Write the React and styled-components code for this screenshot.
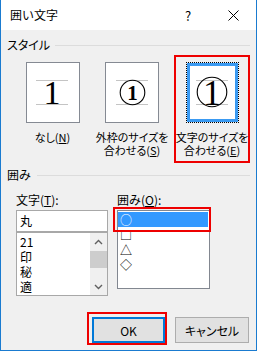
import React from "react";
import styled, { createGlobalStyle } from "styled-components";

const GlobalStyle = createGlobalStyle`
	html, body {
		margin: 0;
		padding: 0;
		background: #ffffff;
	}
	body {
		font-family: "Noto Sans CJK JP", "Noto Sans", sans-serif;
		font-size: 12px;
		color: #000000;
	}
`;

const styleOptions = [
	{ key: "none", lines: [["なし(", "N", ")"]], kind: "plain" },
	{ key: "frame", lines: [["外枠のサイズを"], ["合わせる(", "S", ")"]], kind: "small" },
	{ key: "text", lines: [["文字のサイズを"], ["合わせる(", "E", ")"]], kind: "large", selected: true },
];

const characters = ["21", "印", "秘", "適"];
const enclosures = ["○", "□", "△", "◇"];

const App = () => {
	const renderLabel = (parts, i) => (
		<Line key={i}>
			{parts[0]}
			{parts[1] && <u>{parts[1]}</u>}
			{parts[2]}
		</Line>
	);

	return (
		<>
			<GlobalStyle />
			<Window>
				<TitleBar>
					<Title>囲い文字</Title>
					<HelpButton>?</HelpButton>
					<CloseButton>
						<svg width='11' height='11' viewBox='0 0 11 11'>
							<path d='M0.5 0.5 L10.5 10.5 M10.5 0.5 L0.5 10.5' stroke='#000' strokeWidth='1' />
						</svg>
					</CloseButton>
				</TitleBar>

				<Body>
					<GroupHeader>
						<span>スタイル</span>
						<Rule />
					</GroupHeader>

					<StyleRow>
						{styleOptions.map((o) => (
							<StyleOption key={o.key} $selected={o.selected}>
								{o.kind === "plain" && (
									<Preview>
										<svg width='52' height='59'>
											<line x1='9' y1='17.5' x2='41' y2='17.5' stroke='#c4c4c4' />
											<line x1='9' y1='41.5' x2='41' y2='41.5' stroke='#c4c4c4' />
											<text x='25' y='41' textAnchor='middle' fontFamily='Liberation Serif' fontSize='34'>
												1
											</text>
										</svg>
									</Preview>
								)}
								{o.kind === "small" && (
									<Preview>
										<svg width='52' height='59'>
											<line x1='10' y1='17.5' x2='42' y2='17.5' stroke='#c4c4c4' />
											<line x1='10' y1='41.5' x2='42' y2='41.5' stroke='#c4c4c4' />
											<circle cx='26.5' cy='29.5' r='12.3' fill='none' stroke='#000' strokeWidth='1.1' />
											<text
												x='26.5'
												y='37'
												textAnchor='middle'
												fontFamily='Liberation Serif'
												fontWeight='bold'
												fontSize='21'>
												1
											</text>
										</svg>
									</Preview>
								)}
								{o.kind === "large" && (
									<FocusFrame>
										<SelectedPreview>
											<svg width='45' height='53'>
												<line x1='6' y1='14.5' x2='38' y2='14.5' stroke='#c4c4c4' />
												<line x1='6' y1='38.5' x2='38' y2='38.5' stroke='#c4c4c4' />
												<circle cx='22' cy='26' r='14.8' fill='none' stroke='#000' strokeWidth='1.1' />
												<text x='22' y='38.5' textAnchor='middle' fontFamily='Liberation Serif' fontSize='36'>
													1
												</text>
											</svg>
										</SelectedPreview>
									</FocusFrame>
								)}
								<OptionLabel>{o.lines.map(renderLabel)}</OptionLabel>
							</StyleOption>
						))}
					</StyleRow>

					<GroupHeader $gap='6px' $top='5px'>
						<span>囲み</span>
						<Rule />
					</GroupHeader>

					<FieldRow>
						<Field $width='92px'>
							<FieldLabel>
								文字(<u>T</u>):
							</FieldLabel>
							<TextInput>丸</TextInput>
							<CharList>
								<Items>
									{characters.map((c) => (
										<Item key={c}>{c}</Item>
									))}
								</Items>
								<ScrollBar>
									<ArrowButton>
										<svg width='9' height='6' viewBox='0 0 9 6'>
											<path d='M1 5 L4.5 1.5 L8 5' fill='none' stroke='#606060' strokeWidth='1.4' />
										</svg>
									</ArrowButton>
									<Thumb />
									<Track />
									<ArrowButton>
										<svg width='9' height='6' viewBox='0 0 9 6'>
											<path d='M1 1 L4.5 4.5 L8 1' fill='none' stroke='#606060' strokeWidth='1.4' />
										</svg>
									</ArrowButton>
								</ScrollBar>
							</CharList>
						</Field>

						<Field $width='93px'>
							<FieldLabel>
								囲み(<u>O</u>):
							</FieldLabel>
							<ShapeList>
								{enclosures.map((s, i) => (
									<ShapeItem key={s} $selected={i === 0}>
										{s}
									</ShapeItem>
								))}
								<Highlight />
							</ShapeList>
						</Field>
					</FieldRow>

					<Footer>
						<Marked>
							<Button $primary>OK</Button>
						</Marked>
						<Button>キャンセル</Button>
					</Footer>
				</Body>
			</Window>
		</>
	);
};

export default App;

const Window = styled.div`
	width: 257px;
	height: 351px;
	box-sizing: border-box;
	border: 1px solid #1a7bd0;
	border-top: none;
	display: flex;
	flex-direction: column;
	background: #f0f0f0;
`;

const TitleBar = styled.div`
	height: 30px;
	flex-shrink: 0;
	background: #ffffff;
	display: flex;
	align-items: center;
	padding-left: 9px;
`;

const Title = styled.div`
	flex: 1;
	font-size: 12px;
	line-height: 14px;
`;

const HelpButton = styled.div`
	width: 44px;
	text-align: center;
	font-size: 13px;
`;

const CloseButton = styled.div`
	width: 46px;
	height: 30px;
	display: flex;
	align-items: center;
	justify-content: center;
`;

const Body = styled.div`
	flex: 1;
	display: flex;
	flex-direction: column;
	padding: 8px 6px 5px 6px;
`;

const GroupHeader = styled.div`
	display: flex;
	align-items: center;
	gap: ${(p) => p.$gap || "5px"};
	margin-top: ${(p) => p.$top || "0"};
	height: 14px;
	line-height: 14px;
	font-feature-settings: "palt";
`;

const Rule = styled.div`
	flex: 1;
	height: 1px;
	background: #dcdcdc;
`;

const StyleRow = styled.div`
	display: flex;
	gap: 4px;
	margin: 3px 0 0 8px;
`;

const StyleOption = styled.div`
	width: 76px;
	height: 108px;
	box-sizing: border-box;
	border: 2px solid ${(p) => (p.$selected ? "#ee0000" : "transparent")};
	padding-top: 5px;
	display: flex;
	flex-direction: column;
	align-items: center;
`;

const Preview = styled.div`
	width: 54px;
	height: 61px;
	box-sizing: border-box;
	border: 1px solid #858a93;
	background: #ffffff;
	svg {
		display: block;
	}
`;

const FocusFrame = styled.div`
	width: 53px;
	height: 61px;
	box-sizing: border-box;
	border: 1px dotted #000000;
`;

const SelectedPreview = styled.div`
	height: 100%;
	box-sizing: border-box;
	border: 3px solid #3a9af2;
	background: #ffffff;
	svg {
		display: block;
	}
`;

const OptionLabel = styled.div`
	margin-top: 8px;
	text-align: center;
	font-size: 11px;
	line-height: 13px;
	font-feature-settings: "palt";
	white-space: nowrap;
`;

const Line = styled.div``;

const FieldRow = styled.div`
	display: flex;
	gap: 9px;
	margin: 11px 0 0 9px;
`;

const Field = styled.div`
	width: ${(p) => p.$width};
	display: flex;
	flex-direction: column;
`;

const FieldLabel = styled.div`
	height: 14px;
	line-height: 14px;
	margin-bottom: 3px;
`;

const TextInput = styled.div`
	height: 22px;
	box-sizing: border-box;
	border: 1px solid #a8a8a8;
	background: #ffffff;
	padding-left: 3px;
	line-height: 20px;
	font-size: 12px;
`;

const CharList = styled.div`
	height: 64px;
	box-sizing: border-box;
	border: 1px solid #a8a8a8;
	background: #ffffff;
	display: flex;
`;

const Items = styled.div`
	flex: 1;
	padding: 1px 0 0 3px;
`;

const Item = styled.div`
	height: 15px;
	line-height: 15px;
	font-size: 12px;
`;

const ScrollBar = styled.div`
	width: 17px;
	display: flex;
	flex-direction: column;
	background: #f0f0f0;
`;

const ArrowButton = styled.div`
	height: 17px;
	display: flex;
	align-items: center;
	justify-content: center;
	svg {
		display: block;
	}
`;

const Thumb = styled.div`
	height: 17px;
	margin-top: 1px;
	background: #cdcdcd;
`;

const Track = styled.div`
	flex: 1;
`;

const ShapeList = styled.div`
	position: relative;
	height: 79px;
	box-sizing: border-box;
	border: 1px solid #828790;
	background: #ffffff;
	padding: 1px 1px 0 0;
`;

const ShapeItem = styled.div`
	height: 15px;
	line-height: 15px;
	font-size: 12px;
	padding-left: 2px;
	background: ${(p) => (p.$selected ? "#3399ff" : "transparent")};
	color: ${(p) => (p.$selected ? "#ffffff" : "#000000")};
`;

const Highlight = styled.div`
	position: absolute;
	left: -5px;
	top: -4px;
	width: 98px;
	height: 25px;
	box-sizing: border-box;
	border: 2px solid #ee0000;
`;

const Footer = styled.div`
	margin-top: auto;
	display: flex;
	justify-content: flex-end;
	align-items: flex-start;
	gap: 8px;
	padding-right: 1px;
`;

const Marked = styled.div`
	border: 2px solid #ee0000;
	padding: 3px 0 0 3px;
`;

const Button = styled.div`
	width: ${(p) => (p.$primary ? "73px" : "74px")};
	height: 26px;
	margin-top: ${(p) => (p.$primary ? "0" : "5px")};
	box-sizing: border-box;
	border: ${(p) => (p.$primary ? "2px solid #0078d7" : "1px solid #adadad")};
	background: #e1e1e1;
	display: flex;
	align-items: center;
	justify-content: center;
	font-size: 12px;
	font-feature-settings: "palt";
`;
